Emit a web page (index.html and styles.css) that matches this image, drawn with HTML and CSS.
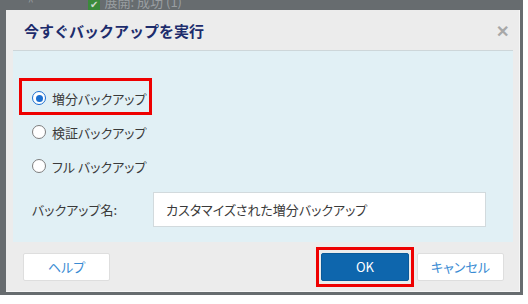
FILE: index.html
```html
<!DOCTYPE html>
<html lang="ja">
  <head>
    <meta charset="UTF-8">
    <title>今すぐバックアップを実行</title>
    <link rel="stylesheet" href="styles.css">
  </head>
  <body>
    <div class="backdrop">
      <div class="behind">
        <span class="behind-caret">^</span>
        <span class="behind-check">&#10004;</span>
        <span class="behind-text">展開: 成功 (1)</span>
      </div>
      <div class="dialog">
        <div class="titlebar">
          <span class="title">今すぐバックアップを実行</span>
          <span class="close">&#10005;</span>
        </div>
        <div class="panel">
          <div class="row marked">
            <span class="radio checked"></span>
            <span>増分バックアップ</span>
          </div>
          <div class="row">
            <span class="radio"></span>
            <span>検証バックアップ</span>
          </div>
          <div class="row">
            <span class="radio"></span>
            <span>フル バックアップ</span>
          </div>
          <div class="name-row">
            <span class="name-label">バックアップ名:</span>
            <div class="name-input">カスタマイズされた増分バックアップ</div>
          </div>
        </div>
        <div class="footer">
          <div class="btn">ヘルプ</div>
          <div class="spacer"></div>
          <div class="ok-mark">
            <div class="btn primary">OK</div>
          </div>
          <div class="btn">キャンセル</div>
        </div>
      </div>
    </div>
  </body>
</html>
```
FILE: styles.css
```css
body {
  margin: 0;
  background: #ffffff;
  font-family: "Noto Sans CJK JP", "Liberation Sans", sans-serif;
}
.backdrop {
  width: 523px;
  height: 295px;
  box-sizing: border-box;
  background: #676c6f;
  padding: 0 3px 3px 6px;
}
.behind {
  height: 10px;
  overflow: hidden;
  display: flex;
  align-items: flex-end;
  font-size: 13px;
  line-height: 16px;
  color: #9a9fa2;
}
.behind-caret {
  margin-left: 22px;
  font-size: 10px;
}
.behind-check {
  margin-left: 54px;
  width: 12px;
  height: 12px;
  background: #3b8a3b;
  color: #cfd8cf;
  font-size: 10px;
  line-height: 12px;
  text-align: center;
}
.behind-text {
  margin-left: 5px;
}
.dialog {
  height: 282px;
  background: #ececec;
  border-right: 1px solid #f6f6f6;
  border-bottom: 1px solid #f6f6f6;
  box-sizing: border-box;
  display: flex;
  flex-direction: column;
}
.titlebar {
  height: 40px;
  display: flex;
  align-items: center;
  padding: 0 10px 0 18px;
}
.title {
  flex: 1;
  font-size: 15px;
  font-weight: bold;
  color: #1d2c6c;
}
.close {
  font-size: 16px;
  font-weight: bold;
  color: #a8a8a8;
}
.panel {
  height: 192px;
  box-sizing: border-box;
  margin: 0 6px 0 7px;
  background: #e1f0f5;
  border-top: 1px solid #cdd6d9;
  padding: 27px 0 0 6px;
  font-size: 13px;
  color: #3a3a3a;
  font-feature-settings: "palt";
}
.row {
  width: 133px;
  height: 34px;
  box-sizing: border-box;
  border: 3px solid transparent;
  display: flex;
  align-items: center;
  padding-left: 10px;
}
.row.marked {
  height: 37px;
  border-color: #ee0000;
  padding-top: 3px;
}
.radio {
  width: 14px;
  height: 14px;
  flex: none;
  box-sizing: border-box;
  border: 1.5px solid #7d7d7d;
  border-radius: 50%;
  background: #ffffff;
  margin-right: 6px;
  display: flex;
  align-items: center;
  justify-content: center;
}
.radio.checked {
  border-color: #1b6fd0;
}
.radio.checked::after {
  content: "";
  width: 7px;
  height: 7px;
  border-radius: 50%;
  background: #1b6fd0;
}
.name-row {
  display: flex;
  align-items: center;
  margin-top: 9px;
  padding-left: 13px;
}
.name-label {
  width: 121px;
}
.name-input {
  width: 333px;
  height: 35px;
  box-sizing: border-box;
  background: #ffffff;
  border: 1px solid #d2dadd;
  padding-left: 12px;
  display: flex;
  align-items: center;
}
.footer {
  flex: 1;
  display: flex;
  align-items: center;
  padding: 0 15px 0 17px;
  font-size: 13px;
  font-feature-settings: "palt";
}
.spacer {
  flex: 1;
}
.btn {
  width: 87px;
  height: 28px;
  box-sizing: border-box;
  background: #ffffff;
  border: 1px solid #dedede;
  border-radius: 2px;
  color: #3a8bd3;
  display: flex;
  align-items: center;
  justify-content: center;
}
.btn.primary {
  width: 88px;
  background: #0e66ad;
  border-color: #0b5a99;
  color: #ffffff;
}
.ok-mark {
  border: 3px solid #ee0000;
  padding: 2px;
  margin-right: 3px;
  height: 40px;
  box-sizing: border-box;
  display: flex;
  align-items: center;
}
```
